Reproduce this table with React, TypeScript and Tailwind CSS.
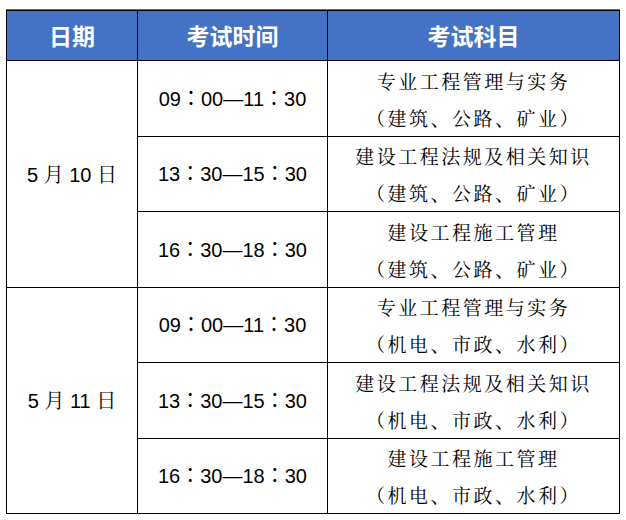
const serif = "font-['Noto_Serif_CJK_SC','Noto_Sans_CJK_SC',serif]";

type Row = { time: string; subject: string; scope: string };

const days: { date: string; day: string; heights: string[]; rows: Row[] }[] = [
  {
    date: "5",
    day: "10",
    heights: ["h-[76px]", "h-[75px]", "h-[76px]"],
    rows: [
      { time: "09：00—11：30", subject: "专业工程管理与实务", scope: "（建筑、公路、矿业）" },
      { time: "13：30—15：30", subject: "建设工程法规及相关知识", scope: "（建筑、公路、矿业）" },
      { time: "16：30—18：30", subject: "建设工程施工管理", scope: "（建筑、公路、矿业）" },
    ],
  },
  {
    date: "5",
    day: "11",
    heights: ["h-[75px]", "h-[76px]", "h-[75px]"],
    rows: [
      { time: "09：00—11：30", subject: "专业工程管理与实务", scope: "（机电、市政、水利）" },
      { time: "13：30—15：30", subject: "建设工程法规及相关知识", scope: "（机电、市政、水利）" },
      { time: "16：30—18：30", subject: "建设工程施工管理", scope: "（机电、市政、水利）" },
    ],
  },
];

export default function App() {
  return (
    <div className="w-[626px] h-[520px] bg-white pl-[6px] pt-[9px]">
      <div className="h-px w-[614px] bg-[#4472c4]" />
      <table className="w-[614px] border-collapse table-fixed">
        <colgroup>
          <col className="w-[131px]" />
          <col className="w-[190px]" />
          <col />
        </colgroup>
        <thead>
          <tr className="h-[50px] bg-[#4472c4] text-white font-bold text-[23px] font-['Noto_Sans_CJK_SC',sans-serif]">
            <th className="border border-black p-0">日期</th>
            <th className="border border-black p-0">考试时间</th>
            <th className="border border-black p-0">考试科目</th>
          </tr>
        </thead>
        <tbody>
          {days.map((d) =>
            d.rows.map((r, i) => (
              <tr key={d.day + i} className={d.heights[i]}>
                {i === 0 && (
                  <td rowSpan={3} className="border border-black p-0 text-center text-[20px] text-black">
                    <span className="font-['Liberation_Sans',sans-serif]">{d.date} </span>
                    <span className={serif}>月</span>
                    <span className="font-['Liberation_Sans',sans-serif]"> {d.day} </span>
                    <span className={serif}>日</span>
                  </td>
                )}
                <td className="border border-black p-0 text-center text-[20px] text-black font-['Liberation_Sans','Noto_Sans_CJK_TC',sans-serif]">
                  {r.time}
                </td>
                <td className={`border border-black p-0 text-center text-[19px] leading-[37px] tracking-[2.5px] text-black ${serif}`}>
                  <div>{r.subject}</div>
                  <div>{r.scope}</div>
                </td>
              </tr>
            ))
          )}
        </tbody>
      </table>
    </div>
  );
}
